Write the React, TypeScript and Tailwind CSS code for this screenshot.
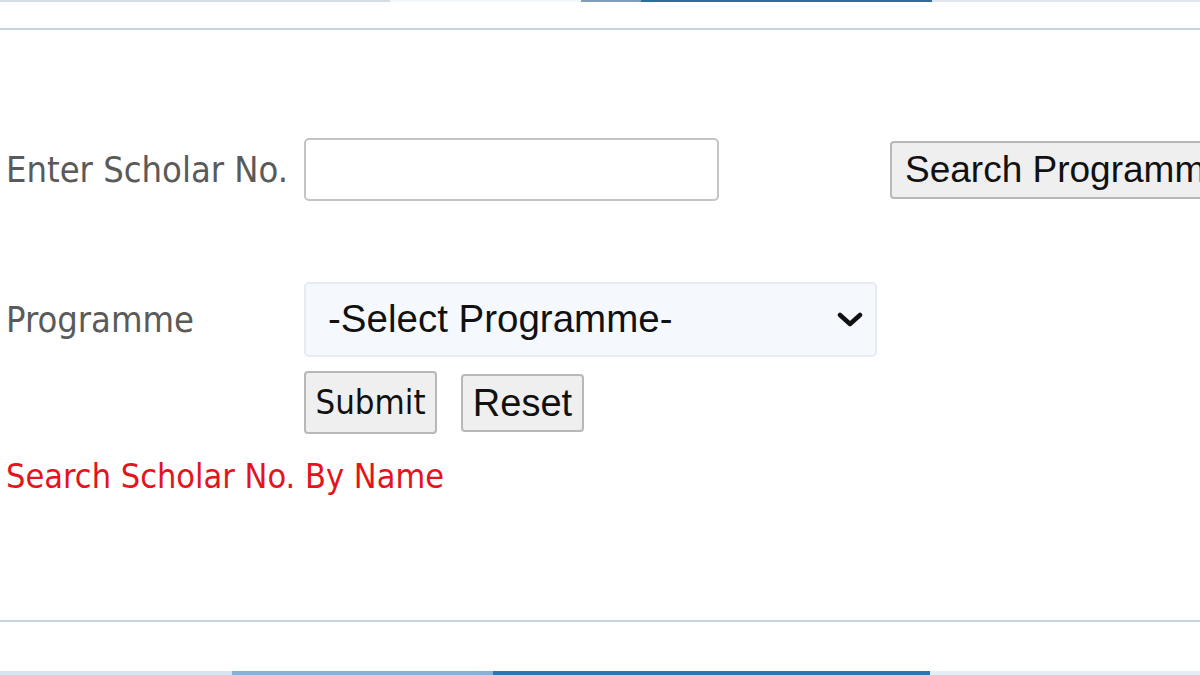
export default function App() {
  const label = "text-[36px] text-[#5a5a5a] [font-family:'DejaVu_Sans_Condensed','DejaVu_Sans',sans-serif] leading-none"

  return (
    <div className="w-[1200px] h-[675px] bg-white flex flex-col overflow-hidden">
      {/* top tab strip */}
      <div className="h-[2px] flex shrink-0">
        <div className="w-[390px] bg-[#d5dce3]" />
        <div className="w-[191px] bg-[#f3f6f9]" />
        <div className="w-[60px] bg-[#7f9db8]" />
        <div className="w-[291px] bg-[#2b6ca3]" />
        <div className="flex-1 bg-[#e0e6ec]" />
      </div>
      <div className="h-[26px] shrink-0" />
      <div className="h-[2px] shrink-0 bg-[#c6d4e1]" />

      {/* form */}
      <div className="flex-1 pt-[108px] overflow-hidden">
        <div className="flex items-center h-[63px] overflow-hidden">
          <div className={`w-[304px] shrink-0 pl-[6px] whitespace-nowrap ${label}`}>Enter Scholar No.</div>
          <input
            type="text"
            className="w-[415px] shrink-0 h-[63px] rounded-[5px] border-2 border-[#c4c4c4] bg-white outline-none"
          />
          <button className="ml-[171px] shrink-0 h-[58px] pl-[13px] pr-[20px] rounded-[4px] border-2 border-[#b8b8b8] bg-[#efefef] text-[37px] text-[#111] whitespace-nowrap [font-family:'Liberation_Sans',Arial,sans-serif] leading-none">
            Search Programme
          </button>
        </div>

        <div className="flex items-center h-[75px] mt-[81px]">
          <div className={`w-[304px] shrink-0 pl-[6px] ${label}`}>Programme</div>
          <div className="w-[573px] shrink-0 h-[75px] rounded-[5px] border-2 border-[#e6ecf2] bg-[#f5f9fe] flex items-center justify-between pl-[22px] pr-[12px]">
            <span className="text-[38.5px] text-[#111] [font-family:'Liberation_Sans',Arial,sans-serif] leading-none">
              -Select Programme-
            </span>
            <svg width="26" height="16" viewBox="0 0 26 16" className="mt-[1px]">
              <polyline points="3,3 13,12 23,3" fill="none" stroke="#111" strokeWidth="4.5" strokeLinecap="round" strokeLinejoin="round" />
            </svg>
          </div>
        </div>

        <div className="flex items-start pl-[304px] mt-[14px]">
          <button className="w-[133px] shrink-0 h-[63px] rounded-[4px] border-2 border-[#b8b8b8] bg-[#efefef] text-[34.5px] text-[#111] [font-family:'DejaVu_Sans_Condensed','DejaVu_Sans',sans-serif] leading-none">
            Submit
          </button>
          <button className="ml-[24px] shrink-0 mt-[3px] w-[123px] h-[58px] rounded-[4px] border-2 border-[#b8b8b8] bg-[#efefef] text-[38px] text-[#111] [font-family:'Liberation_Sans',Arial,sans-serif] leading-none">
            Reset
          </button>
        </div>

        <div className="mt-[22px] pl-[6px] h-[40px] flex items-center">
          <span className="text-[34px] text-[#e5141c] [font-family:'DejaVu_Sans_Condensed','DejaVu_Sans',sans-serif] leading-none">
            Search Scholar No. By Name
          </span>
        </div>
      </div>

      {/* bottom */}
      <div className="h-[2px] shrink-0 bg-[#c6d4e1]" />
      <div className="h-[49px] shrink-0" />
      <div className="h-[4px] shrink-0 flex">
        <div className="w-[232px] bg-[#d6e4f0]" />
        <div className="w-[261px] bg-[#86b0d6]" />
        <div className="w-[437px] bg-[#2a76b3]" />
        <div className="flex-1 bg-[#e4edf5]" />
      </div>
    </div>
  )
}
